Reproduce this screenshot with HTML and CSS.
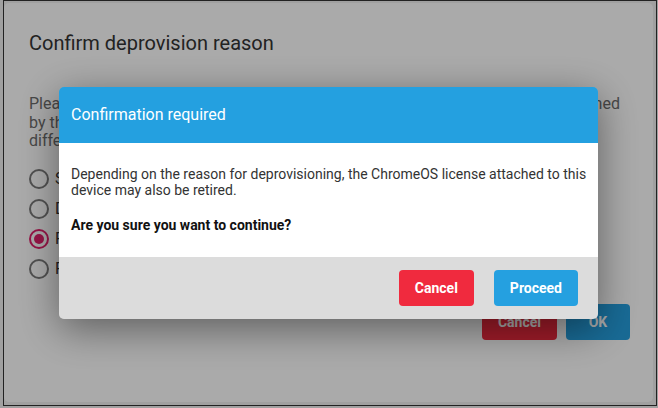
FILE: index.html
```html
<!DOCTYPE html>
<html lang="en">
<head>
    <meta charset="UTF-8">
    <meta name="viewport" content="width=device-width, initial-scale=1.0">
    <title>Confirm deprovision reason</title>
    <link rel="stylesheet" href="styles.css">
</head>
<body>
    <div class="frame">
        <div class="dialog">
            <h2 class="dialog-title">Confirm deprovision reason</h2>
            <p class="dialog-text">
                Please select why this device is being deprovisioned. This choice will be reassigned<br>
                by the console to the device record and may affect the license<br>
                differently depending on which option you pick.
            </p>

            <div class="options">
                <label class="option"><span class="radio"></span>Same model replacement</label>
                <label class="option"><span class="radio"></span>Different model replacement</label>
                <label class="option"><span class="radio checked"></span>Retiring from fleet</label>
                <label class="option"><span class="radio"></span>Repair pending</label>
            </div>

            <div class="dialog-actions">
                <button class="btn btn-danger">Cancel</button>
                <button class="btn btn-primary btn-wide">OK</button>
            </div>
        </div>
    </div>

    <div class="overlay">
        <div class="modal">
            <div class="modal-header">Confirmation required</div>
            <div class="modal-body">
                <p>Depending on the reason for deprovisioning, the ChromeOS license attached to this<br>device may also be retired.</p>
                <p class="modal-question">Are you sure you want to continue?</p>
            </div>
            <div class="modal-footer">
                <button class="btn btn-danger">Cancel</button>
                <button class="btn btn-primary">Proceed</button>
            </div>
        </div>
    </div>
</body>
</html>
```

FILE: styles.css
```css
* {
    margin: 0;
    padding: 0;
    box-sizing: border-box;
}

body {
    font-family: Roboto, 'Liberation Sans', sans-serif;
    background: #f0f0f0;
    color: #333;
    width: 658px;
    height: 408px;
    overflow: hidden;
}

.frame {
    margin-left: 3px;
    width: 654px;
    height: 406px;
    border: 1px solid #333;
}

.dialog {
    margin-top: 2px;
    width: 649px;
    height: 399px;
    background: #fff;
    border-radius: 5px;
    padding: 28px 23px 0 25px;
    display: flex;
    flex-direction: column;
}

.dialog-title {
    font-size: 20px;
    font-weight: 400;
    line-height: 24px;
    color: #333;
}

.dialog-text {
    margin-top: 40px;
    font-size: 16px;
    line-height: 18.5px;
    color: #6c6c6c;
    white-space: nowrap;
}

.options {
    margin-top: 13px;
    display: flex;
    flex-direction: column;
}

.option {
    height: 30px;
    display: flex;
    align-items: center;
    gap: 6px;
    font-size: 16px;
    color: #333;
}

.radio {
    width: 20px;
    height: 20px;
    border: 2px solid #7a7a7a;
    border-radius: 50%;
    display: flex;
    align-items: center;
    justify-content: center;
}

.radio.checked {
    border-color: #e0206a;
}

.radio.checked::after {
    content: "";
    width: 10px;
    height: 10px;
    border-radius: 50%;
    background: #e0206a;
}

.dialog-actions {
    margin-top: 20px;
    display: flex;
    justify-content: flex-end;
    gap: 9px;
}

.btn {
    height: 36px;
    padding: 0 16px;
    border: none;
    border-radius: 4px;
    font-family: inherit;
    font-size: 14px;
    font-weight: 700;
    color: #fff;
}

.btn-wide {
    min-width: 64px;
}

.btn-danger {
    background: #f02a3e;
}

.btn-primary {
    background: #25a0e0;
}

.overlay {
    position: fixed;
    inset: 0;
    background: rgba(0, 0, 0, 0.333);
    display: flex;
    align-items: center;
    justify-content: center;
}

.modal {
    width: 539px;
    margin: 0 1px 2px 0;
    border-radius: 5px;
    overflow: hidden;
    box-shadow: 0 10px 40px rgba(0, 0, 0, 0.45);
}

.modal-header {
    height: 56px;
    line-height: 56px;
    padding: 0 12px;
    background: #24a0e0;
    color: #fff;
    font-size: 16px;
}

.modal-body {
    background: #fff;
    padding: 23px 12px 24px;
    font-size: 14px;
    line-height: 16px;
    color: #333;
    white-space: nowrap;
}

.modal-question {
    margin-top: 19px;
    font-weight: 700;
    color: #111;
}

.modal-footer {
    background: #dcdcdc;
    padding: 13px 20px;
    display: flex;
    justify-content: flex-end;
    gap: 20px;
}
```
